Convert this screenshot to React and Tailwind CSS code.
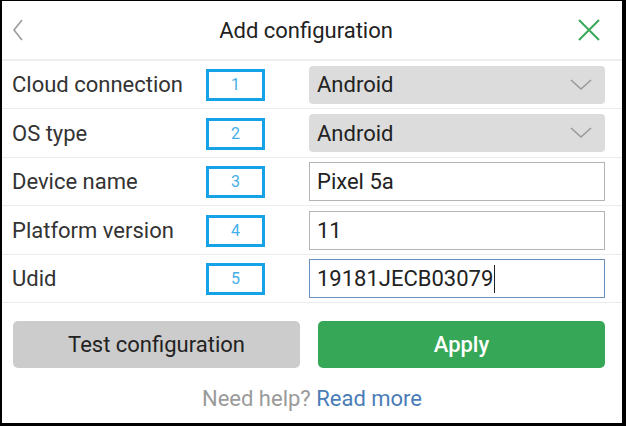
import React from 'react';

const rows = [
  { label: 'Cloud connection', n: 1, kind: 'select', value: 'Android', h: 'h-[48px]' },
  { label: 'OS type', n: 2, kind: 'select', value: 'Android', h: 'h-[49px]' },
  { label: 'Device name', n: 3, kind: 'input', value: 'Pixel 5a', h: 'h-[48px]' },
  { label: 'Platform version', n: 4, kind: 'input', value: '11', h: 'h-[49px]' },
  { label: 'Udid', n: 5, kind: 'focus', value: '19181JECB03079', h: 'h-[48px]' },
];

const Chevron = () => (
  <svg width="22" height="12" viewBox="0 0 22 12" fill="none">
    <path d="M1 1 L11 10 L21 1" stroke="#9a9a9a" strokeWidth="1.6" />
  </svg>
);

const Control = ({ kind, value }) => {
  if (kind === 'select') {
    return (
      <div className="w-[296px] h-[38px] bg-[#dcdcdc] rounded-[4px] flex items-center justify-between pl-[8px] pr-[13px] text-[22px] text-[#222]">
        <span>{value}</span>
        <Chevron />
      </div>
    );
  }
  const border = kind === 'focus' ? 'border-[#6d8fc0]' : 'border-[#b4b4b4]';
  return (
    <div className={`w-[296px] h-[39px] border ${border} bg-white flex items-center pl-[7px] text-[22px] text-[#222]`}>
      <span>{value}</span>
      {kind === 'focus' && <span className="w-px h-[28px] bg-[#222] ml-[1px]" />}
    </div>
  );
};

export default function App() {
  return (
    <div className="w-[626px] h-[426px] bg-white border-l-2 border-t border-r-4 border-b-[3px] border-black font-['Roboto',sans-serif] flex flex-col">
      <div className="h-[60px] flex items-center justify-between pl-[10px] pr-[22px] border-b-2 border-[#eeeeee]">
        <svg width="12" height="22" viewBox="0 0 12 22" fill="none">
          <path d="M10 1 L2 11 L10 21" stroke="#9c9c9c" strokeWidth="1.6" />
        </svg>
        <span className="text-[22px] text-[#222] ml-[10px]">Add configuration</span>
        <svg width="22" height="22" viewBox="0 0 22 22" fill="none">
          <path d="M1 1 L21 21 M21 1 L1 21" stroke="#3aa858" strokeWidth="2" />
        </svg>
      </div>

      {rows.map((r) => (
        <div key={r.n} className={`${r.h} flex items-center border-b border-[#ececec]`}>
          <span className="w-[204px] pl-[10px] text-[22px] text-[#333]">{r.label}</span>
          <div className="w-[59px] h-[32px] mt-[1px] border-[3px] border-[#14a3e6] flex items-center justify-center text-[16px] text-[#45aee8]">
            {r.n}
          </div>
          <div className="ml-[44px]">
            <Control kind={r.kind} value={r.value} />
          </div>
        </div>
      ))}

      <div className="flex gap-[18px] pl-[11px] mt-[18px]">
        <button className="w-[287px] h-[47px] rounded-[5px] bg-[#cccccc] text-[22px] text-[#222]">
          Test configuration
        </button>
        <button className="w-[287px] h-[47px] rounded-[5px] bg-[#36a756] text-[22px] text-white font-medium">
          Apply
        </button>
      </div>

      <div className="mt-[14px] text-center text-[22px]">
        <span className="text-[#9a9a9a]">Need help? </span>
        <span className="text-[#4a7db8]">Read more</span>
      </div>
    </div>
  );
}
